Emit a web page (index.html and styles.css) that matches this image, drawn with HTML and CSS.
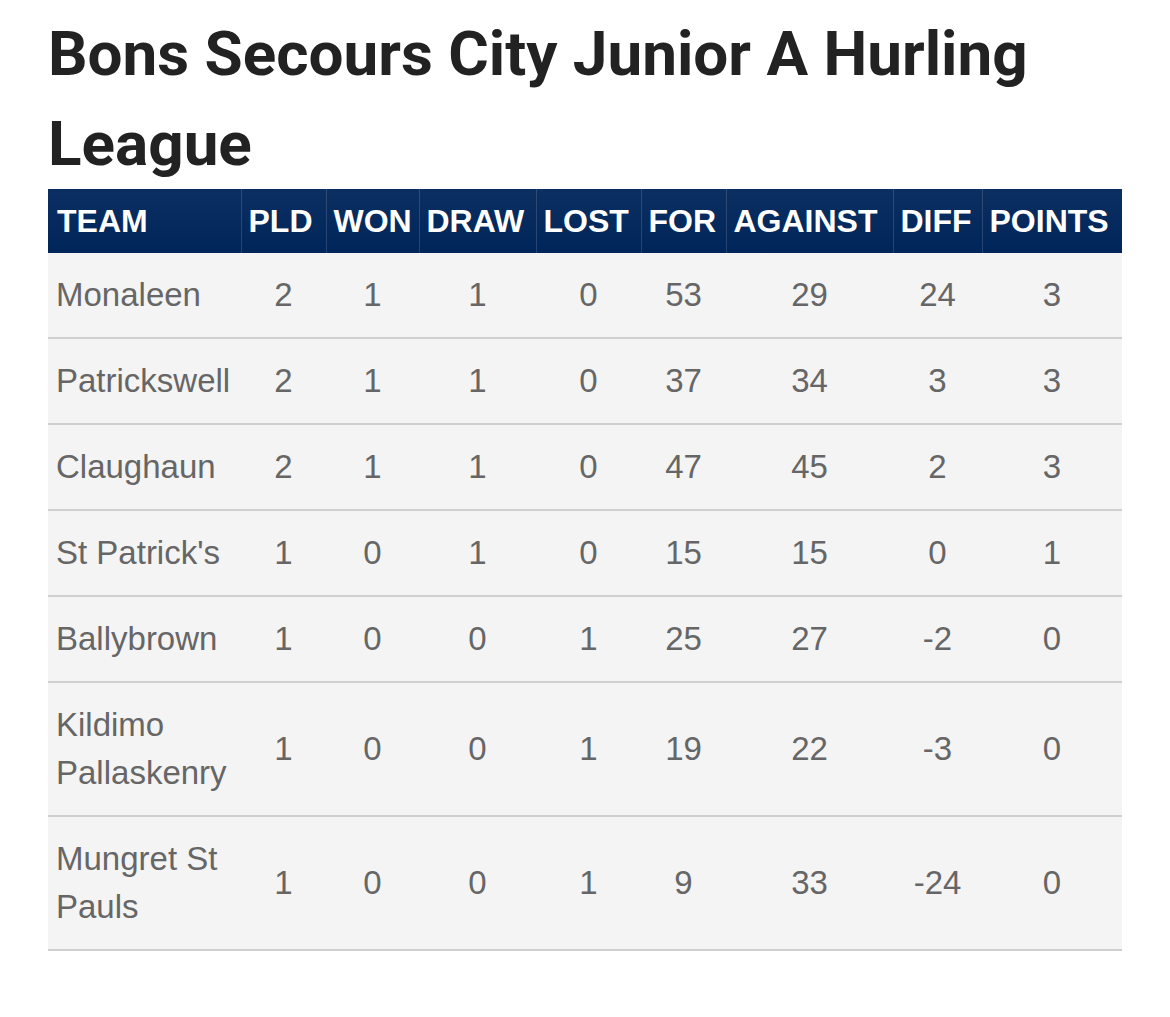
FILE: index.html
```html
<!DOCTYPE html>
<html lang="en">
<head>
<meta charset="utf-8">
<title>Bons Secours City Junior A Hurling League</title>
<link rel="stylesheet" href="styles.css">
</head>
<body>
<main class="page">
  <h1 class="title">Bons Secours City Junior A Hurling League</h1>
  <table class="league">
    <colgroup>
      <col class="c-team">
      <col class="c-pld">
      <col class="c-won">
      <col class="c-draw">
      <col class="c-lost">
      <col class="c-for">
      <col class="c-against">
      <col class="c-diff">
      <col class="c-points">
    </colgroup>
    <thead>
      <tr>
        <th>TEAM</th><th>PLD</th><th>WON</th><th>DRAW</th><th>LOST</th><th>FOR</th><th>AGAINST</th><th>DIFF</th><th>POINTS</th>
      </tr>
    </thead>
    <tbody>
      <tr><td>Monaleen</td><td>2</td><td>1</td><td>1</td><td>0</td><td>53</td><td>29</td><td>24</td><td>3</td></tr>
      <tr><td>Patrickswell</td><td>2</td><td>1</td><td>1</td><td>0</td><td>37</td><td>34</td><td>3</td><td>3</td></tr>
      <tr><td>Claughaun</td><td>2</td><td>1</td><td>1</td><td>0</td><td>47</td><td>45</td><td>2</td><td>3</td></tr>
      <tr><td>St Patrick's</td><td>1</td><td>0</td><td>1</td><td>0</td><td>15</td><td>15</td><td>0</td><td>1</td></tr>
      <tr><td>Ballybrown</td><td>1</td><td>0</td><td>0</td><td>1</td><td>25</td><td>27</td><td>-2</td><td>0</td></tr>
      <tr><td>Kildimo Pallaskenry</td><td>1</td><td>0</td><td>0</td><td>1</td><td>19</td><td>22</td><td>-3</td><td>0</td></tr>
      <tr><td>Mungret St Pauls</td><td>1</td><td>0</td><td>0</td><td>1</td><td>9</td><td>33</td><td>-24</td><td>0</td></tr>
    </tbody>
  </table>
</main>
</body>
</html>
```

FILE: styles.css
```css
html, body {
  margin: 0;
  padding: 0;
  background: #ffffff;
}

.page {
  padding: 9px 48px 40px;
}

.title {
  margin: 0;
  font-family: Roboto, "Liberation Sans", Arial, sans-serif;
  font-weight: 700;
  font-size: 62px;
  line-height: 90px;
  color: #222222;
}

.league {
  width: 100%;
  table-layout: fixed;
  border-collapse: collapse;
  font-family: "Liberation Sans", Arial, sans-serif;
}

.c-team { width: 193px; }
.c-pld { width: 85px; }
.c-won { width: 93px; }
.c-draw { width: 117px; }
.c-lost { width: 105px; }
.c-for { width: 85px; }
.c-against { width: 167px; }
.c-diff { width: 89px; }
.c-points { width: 140px; }

.league thead tr {
  background: linear-gradient(#0b2f61, #00255a);
}

.league th {
  padding: 8px 7px;
  font-size: 32px;
  line-height: 48px;
  font-weight: 700;
  color: #ffffff;
  text-align: left;
  white-space: nowrap;
  border-left: 1px solid rgba(255, 255, 255, 0.14);
}

.league th:first-child {
  border-left: none;
  padding-left: 9px;
}

.league td {
  padding: 18px 8px;
  font-size: 33px;
  line-height: 48px;
  color: #666666;
  text-align: center;
  background: #f4f4f4;
  border-bottom: 2px solid #cfcfcf;
}

.league td:first-child {
  text-align: left;
}
```
